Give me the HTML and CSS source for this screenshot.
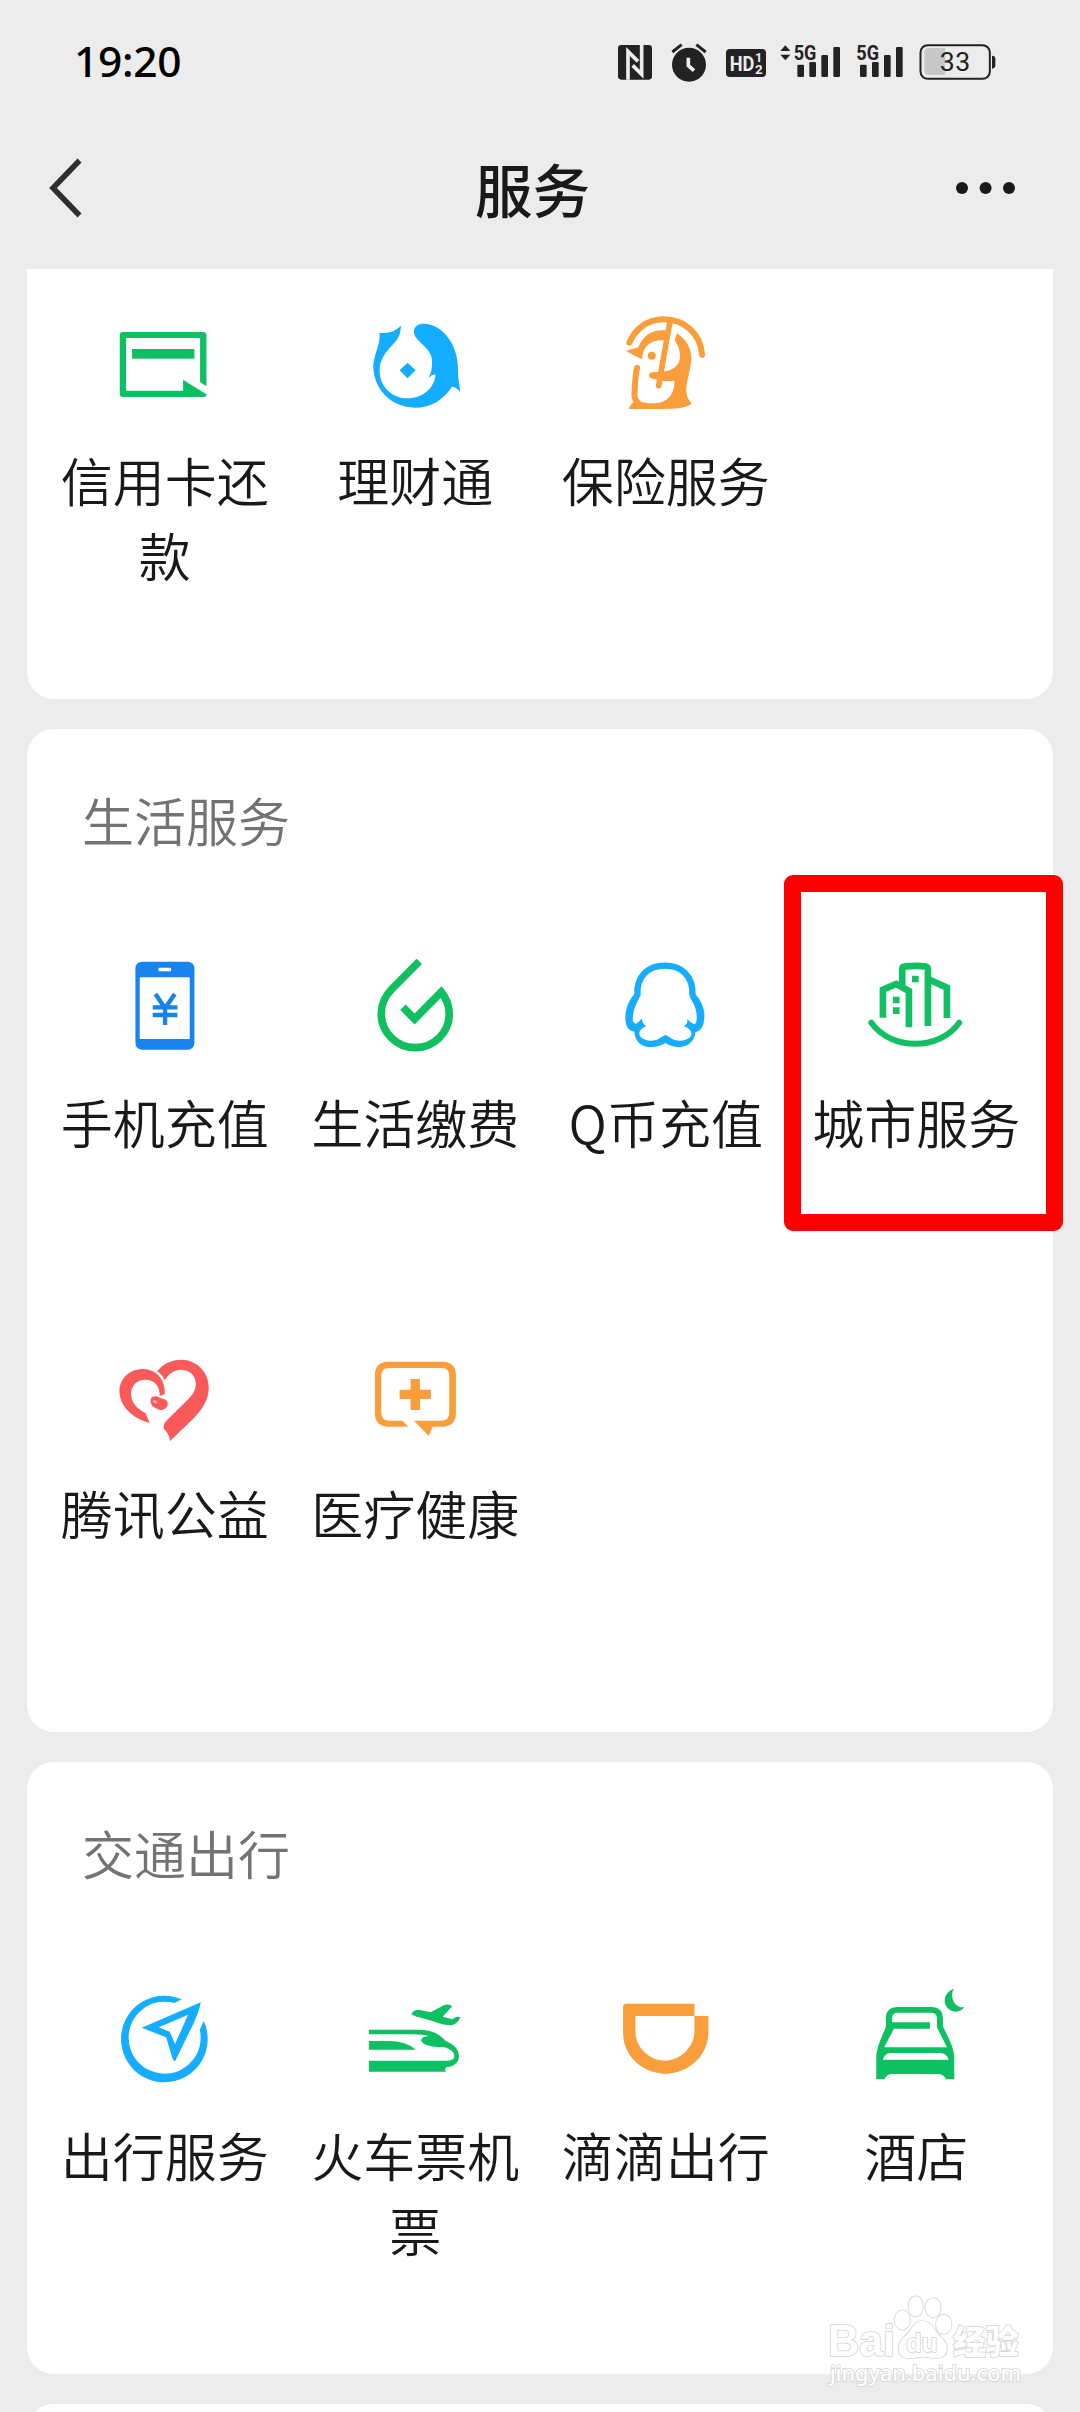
FILE: index.html
```html
<!DOCTYPE html>
<html lang="zh-CN">
<head>
<meta charset="utf-8">
<title>服务</title>
<link rel="stylesheet" href="styles.css">
</head>
<body>
<div class="screen">
  <header class="status">
    <span class="clock">19:20</span>
    <div class="status-icons">
      <svg class="nfc" width="34" height="44" viewBox="84 60 102 132"><rect x="84" y="75" width="102" height="104" rx="10" fill="#222"/><path d="M114 179V94L144 124M155 75V163L128 136" fill="none" stroke="#ececec" stroke-width="11"/></svg>
      <svg class="alarm" width="36" height="44" viewBox="243 60 108 132"><circle cx="297" cy="134" r="51" fill="#222"/><path d="M247 96l28-22M347 96l-28-22" stroke="#222" stroke-width="9"/><path d="M295 113v24l17 15" fill="none" stroke="#ececec" stroke-width="11"/></svg>
      <svg class="hd" width="40" height="44" viewBox="408 60 120 132"><rect x="408" y="87" width="120" height="84" rx="12" fill="#222"/><text x="419" y="152" class="glyph light" font-size="62" textLength="74" lengthAdjust="spacingAndGlyphs">HD</text><text x="495" y="127" class="glyph light" font-size="38" textLength="22" lengthAdjust="spacingAndGlyphs">1</text><text x="495" y="161" class="glyph light" font-size="38" textLength="23" lengthAdjust="spacingAndGlyphs">2</text></svg>
      <svg class="signal-a" width="60" height="44" viewBox="570 60 180 132"><path d="M571 93l15-17 15 17zM571 104l15 17 15-17z" fill="#222"/><text x="611" y="121" class="glyph" font-size="62" textLength="68" lengthAdjust="spacingAndGlyphs">5G</text><g fill="#222"><rect x="622" y="134" width="20" height="37" rx="4"/><rect x="658" y="126" width="20" height="45" rx="4"/><rect x="694" y="105" width="20" height="66" rx="4"/><rect x="730" y="81" width="20" height="90" rx="4"/></g></svg>
      <svg class="signal-b" width="47" height="44" viewBox="799 60 141 132"><text x="800" y="121" class="glyph" font-size="62" textLength="68" lengthAdjust="spacingAndGlyphs">5G</text><g fill="#222"><rect x="811" y="134" width="20" height="37" rx="4"/><rect x="847" y="126" width="20" height="45" rx="4"/><rect x="883" y="105" width="20" height="66" rx="4"/><rect x="919" y="81" width="20" height="90" rx="4"/></g></svg>
      <svg class="battery" width="77" height="44" viewBox="986 60 231 132"><path d="M1065 84h-50q-13 0-13 13v55q0 13 13 13h50z" fill="#c8c8c8"/><rect x="990.5" y="75.500" width="208" height="101" rx="22" fill="none" stroke="#222" stroke-width="6"/><path d="M1205 107q10 1 10 8v22q0 7-10 9z" fill="#222"/><text x="1048" y="153" class="level" font-size="80" textLength="92" lengthAdjust="spacing">33</text></svg>
    </div>
  </header>
  <nav class="nav">
    <svg class="back" width="34" height="60" viewBox="0 0 34 60"><path d="M30.500 2.500L4 30l26.500 27.500" fill="none" stroke="#2e2e2e" stroke-width="5.500"/></svg>
    <h1 class="title">服务</h1>
    <svg class="more" width="60" height="12" viewBox="0 0 60 12" fill="#191919"><circle cx="6" cy="6" r="6"/><circle cx="29.600" cy="6" r="6"/><circle cx="53" cy="6" r="6"/></svg>
  </nav>
  <main class="cards">
    <section class="card card-first">
      <div class="grid">
        <a class="item">
          <svg class="icon green" viewBox="282.750 72 300 300"><path d="M541 276V144H319V302H490V269L560 313Q560 321 552 321H310Q300 321 300 311V136Q300 126 310 126H550Q560 126 560 136V289z"/><rect x="337" y="177" width="187" height="29"/></svg>
          <span class="label">信用卡还款</span>
        </a>
        <a class="item">
          <svg class="icon blue" viewBox="74.250 72 300 300"><path d="M118 128C145 131 164 124 182 107C181 132 174 147 160 161C132 189 118 211 118 242C118 290 156 325 202 325C247 325 282 296 286 253Q276 253 265 263C275 245 276 230 275 210C274 181 246 167 229 145C212 120 225 101 250 101C309 102 352 166 353 230C352 255 357 279 360 306Q350 292 335 290C310 329 272 353 225 353C148 353 99 291 99 229C100 193 121 166 118 128z"/><path d="M202 218l24 23-24 24-24-24z"/></svg>
          <span class="label">理财通</span>
        </a>
        <a class="item">
          <svg class="icon orange" viewBox="825.750 72 300 300"><path d="M869 158C884 122 918 88 971 88C1036 88 1082 132 1087 194" fill="none" stroke="#fa9d3b" stroke-width="18" stroke-linecap="round"/><path fill-rule="evenodd" d="M859 182L896 172C910 134 940 117 979 121L975 151C935 147 908 167 907 208C890 198 875 193 859 182z"/><circle cx="936" cy="197" r="12"/><path d="M990 98L963 250L957 287" fill="none" stroke="#fa9d3b" stroke-width="17" stroke-linecap="round"/><path d="M892 234C885 260 886 290 884 315Q884 331 896 340" fill="none" stroke="#fa9d3b" stroke-width="18" stroke-linecap="round"/><path d="M1011 130C1038 147 1056 174 1055 210C1049 254 1037 285 1040 310Q1044 331 1056 340C1045 354 1010 357 970 357H867Q873 340 889 330Q913 341 945 340C986 338 1005 309 1004 273H965Q943 267 933 265Q923 257 931 248Q940 245 964 246C992 244 1016 232 1020 208C1024 179 1012 164 1005 151z"/></svg>
          <span class="label">保险服务</span>
        </a>
      </div>
    </section>
    <section class="card">
      <h2 class="heading">生活服务</h2>
      <div class="grid">
        <a class="item">
          <svg class="icon" viewBox="192.750 78 300 300"><rect x="257" y="95" width="177" height="264" rx="20" fill="#1883ec"/><path fill="#fff" d="M270 142h150v185H270z"/><rect x="326" y="113" width="38" height="11" rx="3" fill="#fff"/><path d="M317 192l27 40h4l27-40M309 232h74M309 255h74M346 232v53" fill="none" stroke="#1883ec" stroke-width="13"/></svg>
          <span class="label">手机充值</span>
        </a>
        <a class="item">
          <svg class="icon" viewBox="944.250 78 300 300"><path d="M1107 94L1026 176C1000 202 993 224 993 252C993 307 1039 353 1095 353C1151 353 1197 307 1197 252Q1197 216 1173 186L1093 267L1058 232" fill="none" stroke="#10c060" stroke-width="23"/></svg>
          <span class="label">生活缴费</span>
        </a>
        <a class="item">
          <svg class="icon" viewBox="165.750 288 300 300"><path d="M233 408C229 345 268 317 315 317C362 317 402 345 398 408" fill="none" stroke="#18acfc" stroke-width="19"/><path fill="#18acfc" d="M224 402L242 407C226 435 216 465 220 484Q226 495 232 489L246 476L249 488L259 499C239 507 233 522 244 532C257 545 286 545 301 534L317 524L333 534C348 545 377 545 390 532C401 522 394 507 373 499L382 490L383 477Q395 490 404 492Q411 490 411 470C411 448 402 429 389 410L407 402C427 424 438 455 433 479C431 501 422 513 407 516C406 538 390 558 364 561Q338 563 317 549Q294 563 267 561C240 559 225 539 224 515C210 513 199 505 197 481C195 453 204 424 224 402z"/></svg>
          <span class="label">Q币充值</span>
        </a>
        <a class="item marked">
          <svg class="icon" viewBox="917.250 288 300 300"><g fill="none" stroke="#13bf63" stroke-width="20"><path d="M968 473V389L1008 372L1046 393V502M1026 378V327Q1026 319 1036 319Q1066 316 1094 319Q1103 320 1103 329V498M1103 357L1160 383V474"/><path d="M933 488C991 572 1139 572 1197 488" stroke-linecap="round" stroke-width="18"/></g><path fill="#13bf63" d="M1055 347h20v20h-20zM998 410h20v20h-20zM998 442h20v20h-20z"/></svg>
          <span class="label">城市服务</span>
        </a>
        <a class="item">
          <svg class="icon red" viewBox="192.750 51 300 300"><path d="M300 279C245 264 209 226 209 182C210 144 242 117 279 117C322 117 348 151 345 193L330 198C331 168 314 149 287 149C261 149 244 167 244 192C244 218 263 237 287 249z"/><path d="M322 124C340 101 366 89 395 89C441 89 477 127 477 171C477 233 431 265 361 333Q357 309 343 298Q337 286 350 272L418 205C436 186 439 171 438 157C435 130 414 119 394 119C371 120 356 132 345 151Q337 133 322 124z"/><path d="M306 202Q317 195 330 203L348 209Q357 218 353 226Q349 239 335 240Q322 239 307 227Q298 212 306 202z"/><ellipse cx="316" cy="215" rx="7" ry="4" fill="#fff" opacity=".6" transform="rotate(15 316 215)"/></svg>
          <span class="label">腾讯公益</span>
        </a>
        <a class="item">
          <svg class="icon orange" viewBox="944.250 51 300 300"><path d="M1074 290H1012Q975 288 974 252V134Q975 96 1012 95H1179Q1216 97 1217 134V252Q1215 288 1180 290H1147L1136 318L1091 272H1174Q1196 272 1197 250V136Q1196 115 1176 114H1015Q993 115 993 136V250Q994 271 1015 272H1057z"/><path d="M1081 147h28v32h33v28h-33v33h-28v-33h-33v-28h33z"/></svg>
          <span class="label">医疗健康</span>
        </a>
      </div>
    </section>
    <section class="card">
      <h2 class="heading">交通出行</h2>
      <div class="grid">
        <a class="item">
          <svg class="icon blue" viewBox="192.750 87 300 300"><path d="M396 118L374 129A108 108 0 1 0 450 209L462 183A130 130 0 1 1 396 118z"/><path fill-rule="evenodd" d="M276 203L453 127Q449 153 431 191L376 304L369 298L349 232zM327 202L360 215L376 252L415 164z"/></svg>
          <span class="label">出行服务</span>
        </a>
        <a class="item">
          <svg class="icon green" viewBox="944.250 87 300 300"><path fill-rule="evenodd" d="M956 209H1100C1144 210 1162 217 1187 243C1213 254 1227 271 1226 291C1225 309 1210 320 1190 321Q1181 325 1187 335H956V302H1186C1208 303 1213 296 1212 286Q1210 271 1184 262C1145 263 1120 255 1113 244Q1110 231 1135 228Q1118 223 1090 223H956z"/><path d="M956 243H1020Q1070 245 1097 269H956zM1083 163Q1088 150 1105 149L1141 157L1182 135Q1197 131 1206 139L1177 170L1207 178Q1213 168 1230 171C1225 185 1217 193 1202 196C1170 196 1148 181 1117 175Q1094 170 1083 163z"/></svg>
          <span class="label">火车票机票</span>
        </a>
        <a class="item">
          <svg class="icon orange" viewBox="165.750 87 300 300"><path fill-rule="evenodd" d="M200 131H404V168H446V220C444 291 383 341 318 341C250 341 191 291 190 220V141Q190 131 200 131zM227 168V215C227 263 270 302 316 302C362 302 404 260 404 215V168z"/></svg>
          <span class="label">滴滴出行</span>
        </a>
        <a class="item">
          <svg class="icon green" viewBox="917.250 87 300 300"><path fill-rule="evenodd" d="M948 358V288C952 252 966 229 977 200V170Q979 143 1010 141H1117Q1147 143 1148 173V199C1164 232 1180 260 1182 290V358H1157Q1150 343 1135 342H993Q979 343 973 358zM1001 187H1109V206H1001L972 262H1160L1130 202V174Q1129 158 1112 158H1013Q996 158 996 173V187zM968 299H1165Q1159 279 1140 279H990Q974 280 968 299z"/><path d="M1181 86Q1169 105 1182 128Q1193 143 1212 142C1201 157 1181 159 1166 148C1146 130 1149 99 1181 86z"/></svg>
          <span class="label">酒店</span>
        </a>
      </div>
    </section>
    <section class="card"></section>
  </main>
  <svg class="watermark" viewBox="140 70 600 300">
    <g fill="#fff" stroke="#d4d4d4" stroke-width="5" paint-order="stroke">
      <text x="143" y="259" class="wm-logo" font-size="132" textLength="201" lengthAdjust="spacingAndGlyphs">Bai</text>
      <ellipse cx="366" cy="151" rx="23" ry="29"/><ellipse cx="406" cy="110" rx="22" ry="30"/><ellipse cx="458" cy="114" rx="23" ry="29"/><ellipse cx="490" cy="164" rx="23" ry="29"/>
      <path d="M427 154C456 154 460 184 482 202C508 225 504 263 474 265C455 267 443 261 427 261C411 261 399 267 380 265C350 263 346 225 372 202C394 184 398 154 427 154z"/>
      <text x="377" y="246" class="wm-logo" font-size="76" textLength="94" lengthAdjust="spacingAndGlyphs">du</text>
      <text x="518" y="252" class="wm-cjk" font-size="99" textLength="197" lengthAdjust="spacingAndGlyphs">经验</text>
      <text x="148" y="335" class="wm-url" font-size="64" textLength="574" lengthAdjust="spacingAndGlyphs">jingyan.baidu.com</text>
    </g>
  </svg>
</div>
</body>
</html>
```
FILE: styles.css
```css
*, *::after { box-sizing: border-box; }

body {
  margin: 0;
  background: #ececec;
  color: #191919;
  font-family: "Noto Sans CJK SC", "Noto Sans", sans-serif;
}

.screen {
  position: relative;
  width: 1080px;
  height: 2412px;
  overflow: hidden;
}

svg { display: block; flex: none; }

.status {
  display: flex;
  align-items: center;
  justify-content: space-between;
  height: 124px;
  padding: 0 84px 0 74px;
}

.clock {
  margin-bottom: 2px;
  color: #000;
  font: 500 42.500px/50px "Noto Sans", sans-serif;
  letter-spacing: -0.3px;
}

.status-icons { display: flex; align-items: center; }
.alarm { margin-left: 19px; }
.hd { margin-left: 19px; }
.signal-a { margin-left: 14px; }
.signal-b { margin-left: 16px; }
.battery { margin-left: 16px; }

.glyph { font-family: Roboto, sans-serif; font-weight: 700; fill: #222; }
.glyph.light { fill: #ececec; }
.level { font-family: Roboto, sans-serif; font-weight: 400; fill: #222; }

.nav {
  display: grid;
  grid-template-columns: 1fr auto 1fr;
  align-items: center;
  height: 145px;
  padding: 0 64px 17px 49px;
}

.more { justify-self: end; }

.title {
  margin: 0 0 1px;
  font-size: 57.500px;
  font-weight: 500;
  line-height: 80px;
}

.cards {
  display: flex;
  flex-direction: column;
  gap: 30px;
  padding: 0 27px;
}

.card {
  min-height: 60px;
  border-radius: 27px;
  background: #fff;
}

.card-first {
  padding-top: 39px;
  border-radius: 0 0 27px 27px;
}

.heading {
  height: 221px;
  margin: 0;
  padding: 53px 55px 0;
  color: #737373;
  font-size: 52px;
  font-weight: 350;
  line-height: 76px;
}

.grid {
  display: grid;
  grid-template-columns: repeat(4, 1fr);
  grid-auto-rows: 391px;
  padding: 0 12px;
}

.item {
  position: relative;
  display: flex;
  flex-direction: column;
  align-items: center;
  padding-top: 6px;
}

.icon { width: 100px; height: 100px; }
.green { fill: #0ec062; }
.blue { fill: #14adff; }
.orange { fill: #fa9d3b; }
.red { fill: #fa5a5a; }

.label {
  width: 210px;
  margin: 28px 0 0 1px;
  font-size: 52px;
  font-weight: 350;
  line-height: 75px;
  text-align: center;
}

/* Highlight frame around the selected service */
.marked::after {
  content: "";
  position: absolute;
  top: -75px;
  left: -7px;
  width: 279px;
  height: 356px;
  border: 17px solid #f00;
  border-radius: 9px;
}

.watermark {
  position: absolute;
  left: 826.7px;
  top: 2293.3px;
  width: 200px;
  height: 100px;
}

.wm-logo { font-family: "Liberation Sans", sans-serif; font-weight: 700; }
.wm-cjk { font-family: "Noto Sans CJK SC", sans-serif; font-weight: 900; }
.wm-url { font-family: "Noto Sans", sans-serif; font-weight: 500; }
```
